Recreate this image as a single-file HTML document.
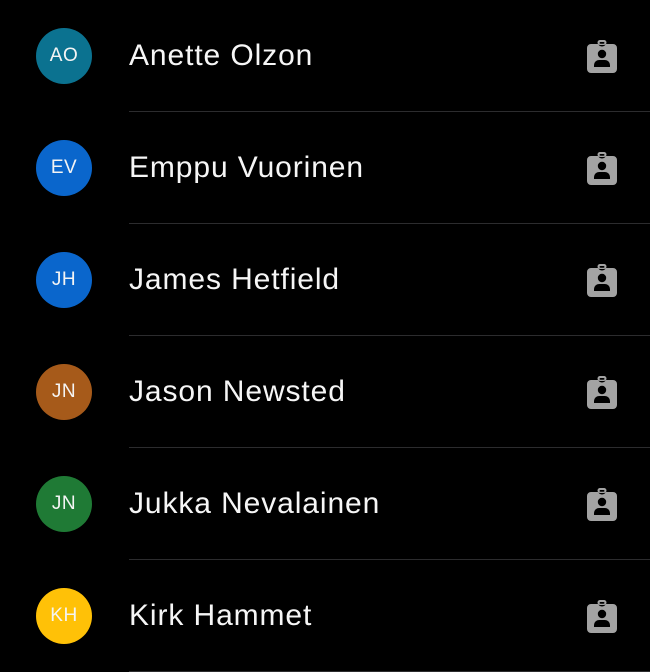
<!DOCTYPE html>
<html><head><style>
body{margin:0;background:#000;width:650px;height:672px;overflow:hidden;font-family:"Liberation Sans",sans-serif}
.row{position:relative;height:112px}
.av{position:absolute;left:36px;top:28px;width:56px;height:56px;border-radius:50%;color:#f4f4f4;font-size:19px;line-height:56px;text-align:center;letter-spacing:0.5px}
.nm{position:absolute;left:129px;top:0;line-height:112px;font-size:30px;color:#f6f6f6;letter-spacing:0.9px}
.ln{position:absolute;left:129px;right:0;bottom:0;height:1px;background:#2c2c2e}
svg{position:absolute;left:587px;top:40px}
</style></head><body>
<div class="row"><div class="av" style="background:#0b7290">AO</div><div class="nm">Anette Olzon</div><svg width="30" height="33" viewBox="0 0 30 33"><path d="M4 4h7.5a3.5 2.5 0 0 0 7 0H26a4 4 0 0 1 4 4v21a4 4 0 0 1-4 4H4a4 4 0 0 1-4-4V8a4 4 0 0 1 4-4z" fill="#a3a3a3"/><rect x="10.5" y="0" width="9" height="5" rx="2.5" fill="#a3a3a3"/><rect x="12.5" y="2" width="5" height="1.8" rx="0.9" fill="#000"/><circle cx="15" cy="14" r="4.2" fill="#000"/><path d="M7 27v-2a5 5 0 0 1 5-5h6a5 5 0 0 1 5 5v2z" fill="#000"/></svg><div class="ln"></div></div>
<div class="row"><div class="av" style="background:#0a66cc">EV</div><div class="nm">Emppu Vuorinen</div><svg width="30" height="33" viewBox="0 0 30 33"><path d="M4 4h7.5a3.5 2.5 0 0 0 7 0H26a4 4 0 0 1 4 4v21a4 4 0 0 1-4 4H4a4 4 0 0 1-4-4V8a4 4 0 0 1 4-4z" fill="#a3a3a3"/><rect x="10.5" y="0" width="9" height="5" rx="2.5" fill="#a3a3a3"/><rect x="12.5" y="2" width="5" height="1.8" rx="0.9" fill="#000"/><circle cx="15" cy="14" r="4.2" fill="#000"/><path d="M7 27v-2a5 5 0 0 1 5-5h6a5 5 0 0 1 5 5v2z" fill="#000"/></svg><div class="ln"></div></div>
<div class="row"><div class="av" style="background:#0a66cc">JH</div><div class="nm">James Hetfield</div><svg width="30" height="33" viewBox="0 0 30 33"><path d="M4 4h7.5a3.5 2.5 0 0 0 7 0H26a4 4 0 0 1 4 4v21a4 4 0 0 1-4 4H4a4 4 0 0 1-4-4V8a4 4 0 0 1 4-4z" fill="#a3a3a3"/><rect x="10.5" y="0" width="9" height="5" rx="2.5" fill="#a3a3a3"/><rect x="12.5" y="2" width="5" height="1.8" rx="0.9" fill="#000"/><circle cx="15" cy="14" r="4.2" fill="#000"/><path d="M7 27v-2a5 5 0 0 1 5-5h6a5 5 0 0 1 5 5v2z" fill="#000"/></svg><div class="ln"></div></div>
<div class="row"><div class="av" style="background:#a65a1a">JN</div><div class="nm">Jason Newsted</div><svg width="30" height="33" viewBox="0 0 30 33"><path d="M4 4h7.5a3.5 2.5 0 0 0 7 0H26a4 4 0 0 1 4 4v21a4 4 0 0 1-4 4H4a4 4 0 0 1-4-4V8a4 4 0 0 1 4-4z" fill="#a3a3a3"/><rect x="10.5" y="0" width="9" height="5" rx="2.5" fill="#a3a3a3"/><rect x="12.5" y="2" width="5" height="1.8" rx="0.9" fill="#000"/><circle cx="15" cy="14" r="4.2" fill="#000"/><path d="M7 27v-2a5 5 0 0 1 5-5h6a5 5 0 0 1 5 5v2z" fill="#000"/></svg><div class="ln"></div></div>
<div class="row"><div class="av" style="background:#1f7a35">JN</div><div class="nm">Jukka Nevalainen</div><svg width="30" height="33" viewBox="0 0 30 33"><path d="M4 4h7.5a3.5 2.5 0 0 0 7 0H26a4 4 0 0 1 4 4v21a4 4 0 0 1-4 4H4a4 4 0 0 1-4-4V8a4 4 0 0 1 4-4z" fill="#a3a3a3"/><rect x="10.5" y="0" width="9" height="5" rx="2.5" fill="#a3a3a3"/><rect x="12.5" y="2" width="5" height="1.8" rx="0.9" fill="#000"/><circle cx="15" cy="14" r="4.2" fill="#000"/><path d="M7 27v-2a5 5 0 0 1 5-5h6a5 5 0 0 1 5 5v2z" fill="#000"/></svg><div class="ln"></div></div>
<div class="row"><div class="av" style="background:#ffc107">KH</div><div class="nm">Kirk Hammet</div><svg width="30" height="33" viewBox="0 0 30 33"><path d="M4 4h7.5a3.5 2.5 0 0 0 7 0H26a4 4 0 0 1 4 4v21a4 4 0 0 1-4 4H4a4 4 0 0 1-4-4V8a4 4 0 0 1 4-4z" fill="#a3a3a3"/><rect x="10.5" y="0" width="9" height="5" rx="2.5" fill="#a3a3a3"/><rect x="12.5" y="2" width="5" height="1.8" rx="0.9" fill="#000"/><circle cx="15" cy="14" r="4.2" fill="#000"/><path d="M7 27v-2a5 5 0 0 1 5-5h6a5 5 0 0 1 5 5v2z" fill="#000"/></svg><div class="ln"></div></div>
</body></html>
